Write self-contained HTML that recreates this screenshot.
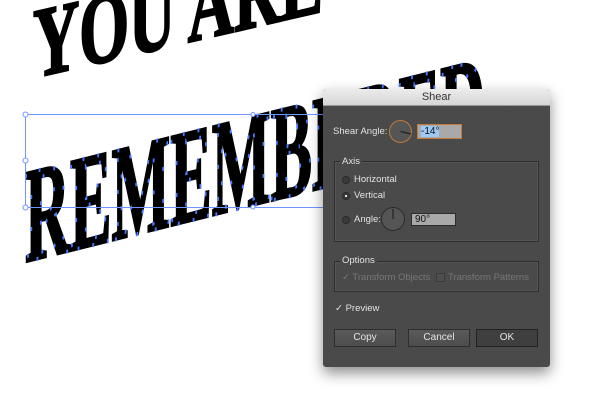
<!DOCTYPE html>
<html><head><style>
*{margin:0;padding:0;box-sizing:border-box}
body{width:600px;height:400px;overflow:hidden;background:#fff;position:relative;font-family:"Liberation Sans",sans-serif}
.dlg{position:absolute;left:323px;top:89px;width:227px;height:278px;background:#4a4a4a;box-shadow:0 6px 14px rgba(0,0,0,.45);border-radius:3px;overflow:hidden}
.tb{height:17px;background:linear-gradient(#ececec,#d6d6d6);color:#333;font-size:11px;text-align:center;line-height:17px;border-bottom:1px solid #999}
.t{position:absolute;color:#e2e2e2;font-size:9.5px;white-space:nowrap}
.grp{position:absolute;border:1px solid #2e2e2e;box-shadow:inset 0 0 0 1px #555}
.rad{position:absolute;width:8px;height:8px;border-radius:50%;background:#3a3a3a;border:1px solid #2a2a2a}
.in{position:absolute;background:#a9a9a9;border:1px solid #2c2c2c;font-size:10px;color:#111;padding-left:3px;line-height:12px}
.btn{position:absolute;top:240px;height:18px;background:linear-gradient(#5a5a5a,#4d4d4d);border:1px solid #2e2e2e;color:#e4e4e4;font-size:10px;text-align:center;line-height:16px}
.dial{position:absolute;border-radius:50%;background:#555;border:1px solid #2c2c2c}
</style></head><body>
<svg width="600" height="400" style="position:absolute;left:0;top:0">
<g transform="translate(33,78) skewY(-13)">
<text x="0" y="0" font-family="Liberation Serif" font-weight="bold" font-size="100" textLength="290" lengthAdjust="spacingAndGlyphs" stroke="#000" stroke-width="2.5">YOU ARE</text>
</g>
<g transform="translate(25,262) skewY(-14)">
<text x="0" y="0" font-family="Liberation Serif" font-weight="bold" font-size="135" textLength="460" lengthAdjust="spacingAndGlyphs" stroke="#000" stroke-width="3">REMEMBERED</text>
<text x="0" y="0" font-family="Liberation Serif" font-weight="bold" font-size="135" textLength="460" lengthAdjust="spacingAndGlyphs" fill="none" stroke="#4a7aff" stroke-width="4" stroke-dasharray="4 28">REMEMBERED</text>
</g>
<rect x="25.5" y="114.5" width="300" height="93" fill="none" stroke="#6e95ff" stroke-width="1"/>
<circle cx="25.5" cy="114.5" r="2.5" fill="#fff" stroke="#6e95ff"/>
<circle cx="25.5" cy="160.5" r="2.5" fill="#fff" stroke="#6e95ff"/>
<circle cx="25.5" cy="207.5" r="2.5" fill="#fff" stroke="#6e95ff"/>
<circle cx="253" cy="114.5" r="2" fill="#fff" stroke="#6e95ff"/>
<circle cx="253" cy="207" r="2" fill="#fff" stroke="#6e95ff"/>
</svg>
<div class="dlg">
<div class="tb">Shear</div>
<div class="t" style="left:10px;top:37px">Shear Angle:</div>
<div class="dial" style="left:66px;top:31px;width:23px;height:23px;border:1px solid #c07a3a"></div>
<svg style="position:absolute;left:66px;top:31px" width="23" height="23"><line x1="11.5" y1="11.5" x2="22" y2="14" stroke="#222" stroke-width="1.3"/></svg>
<div class="in" style="left:94px;top:35px;width:45px;height:15px;border:1px solid #c07a3a;line-height:13px"><span style="background:#9ccaf5">-14°</span></div>
<div class="grp" style="left:11px;top:72px;width:205px;height:81px"></div>
<div class="t" style="left:17px;top:67px;background:#4a4a4a;padding:0 2px">Axis</div>
<div class="rad" style="left:19px;top:87px"></div><div class="t" style="left:31px;top:85px">Horizontal</div>
<div class="rad" style="left:19px;top:103px"><div style="width:2px;height:2px;background:#ddd;margin:2px"></div></div><div class="t" style="left:31px;top:101px">Vertical</div>
<div class="rad" style="left:19px;top:127px"></div><div class="t" style="left:31px;top:125px">Angle:</div>
<div class="dial" style="left:58px;top:118px;width:24px;height:24px"></div>
<svg style="position:absolute;left:58px;top:118px" width="24" height="24"><line x1="12" y1="12" x2="12" y2="2" stroke="#222" stroke-width="1.2"/></svg>
<div class="in" style="left:88px;top:124px;width:45px;height:13px">90°</div>
<div class="grp" style="left:11px;top:172px;width:205px;height:31px"></div>
<div class="t" style="left:17px;top:166px;background:#4a4a4a;padding:0 2px">Options</div>
<div class="t" style="left:19px;top:183px;color:#777">✓ Transform Objects</div>
<div style="position:absolute;left:113px;top:184px;width:9px;height:9px;border:1px solid #3a3a3a;background:#4e4e4e"></div>
<div class="t" style="left:125px;top:183px;color:#777">Transform Patterns</div>
<div class="t" style="left:12px;top:214px">✓ Preview</div>
<div class="btn" style="left:11px;width:62px">Copy</div>
<div class="btn" style="left:85px;width:62px">Cancel</div>
<div class="btn" style="left:153px;width:62px;background:#3f3f3f;border:1px solid #222">OK</div>
</div>
</body></html>
